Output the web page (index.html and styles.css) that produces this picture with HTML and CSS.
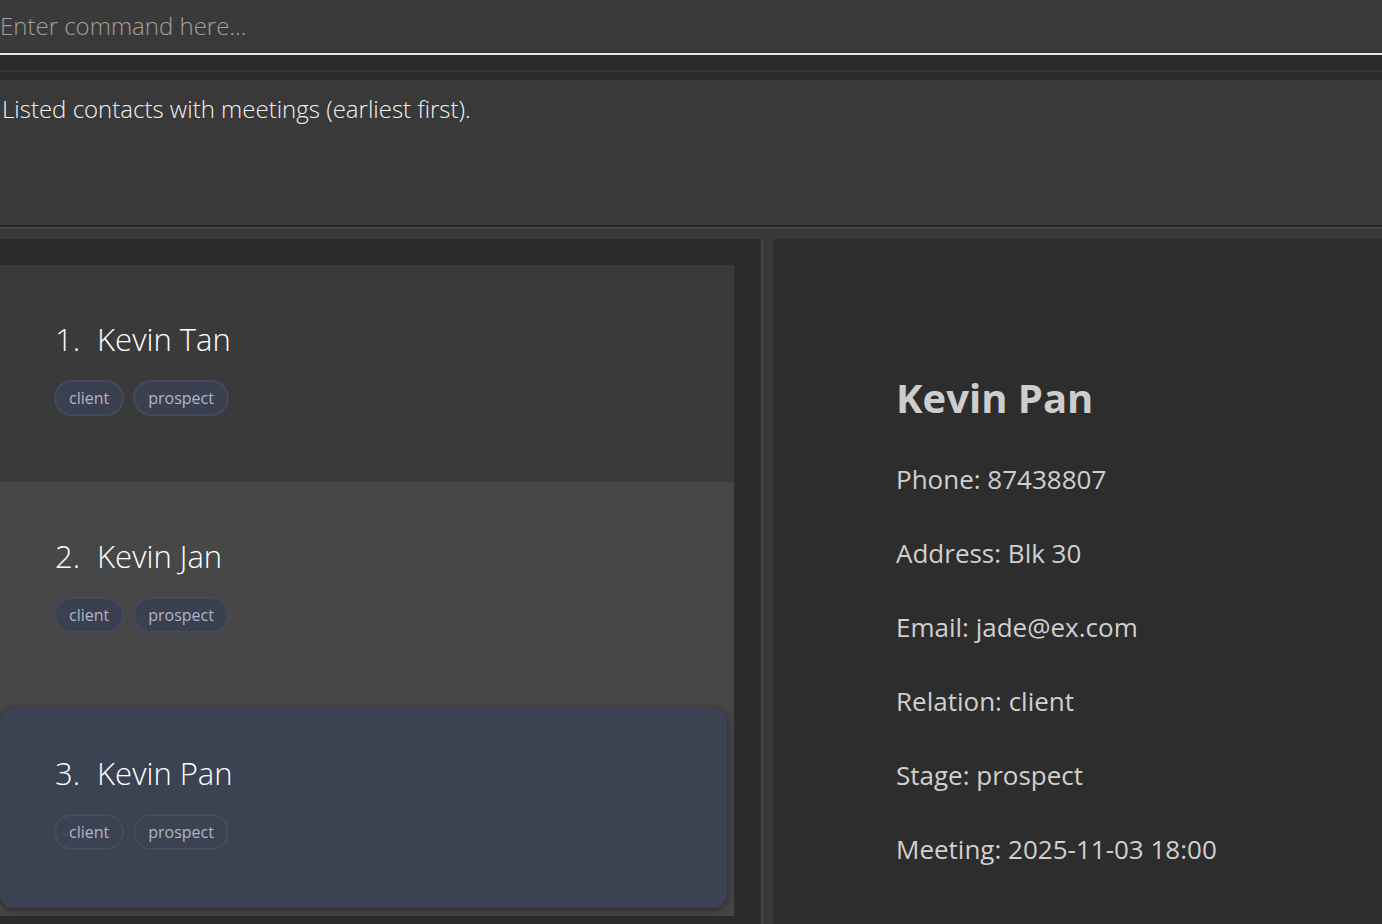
FILE: index.html
```html
<!DOCTYPE html>
<html lang="en">
<head>
<meta charset="utf-8">
<title>Contacts</title>
<link rel="stylesheet" href="styles.css">
</head>
<body>
<div class="app">
  <div class="command">
    <input class="command-input" type="text" placeholder="Enter command here...">
  </div>
  <div class="gap-bar"><div class="gap-line"></div></div>
  <div class="result">Listed contacts with meetings (earliest first).</div>
  <div class="result-divider"></div>
  <div class="main">
    <div class="list-pane">
      <div class="list">
        <div class="cell odd">
          <div class="card">
            <div class="name"><span class="idx">1.</span><span>Kevin Tan</span></div>
            <div class="tags"><span class="tag">client</span><span class="tag">prospect</span></div>
          </div>
        </div>
        <div class="cell even">
          <div class="card">
            <div class="name"><span class="idx">2.</span><span>Kevin Jan</span></div>
            <div class="tags"><span class="tag">client</span><span class="tag">prospect</span></div>
          </div>
        </div>
        <div class="cell selected">
          <div class="card">
            <div class="name"><span class="idx">3.</span><span>Kevin Pan</span></div>
            <div class="tags"><span class="tag">client</span><span class="tag">prospect</span></div>
          </div>
        </div>
      </div>
    </div>
    <div class="split"></div>
    <div class="detail-pane">
      <h1 class="detail-name">Kevin Pan</h1>
      <p class="detail-row">Phone: 87438807</p>
      <p class="detail-row">Address: Blk 30</p>
      <p class="detail-row">Email: jade@ex.com</p>
      <p class="detail-row">Relation: client</p>
      <p class="detail-row">Stage: prospect</p>
      <p class="detail-row">Meeting: 2025-11-03 18:00</p>
    </div>
  </div>
</div>
</body>
</html>
```
FILE: styles.css
```css
* { box-sizing: border-box; }
html, body { margin: 0; padding: 0; height: 100%; }
body {
  background: #2c2c2c;
  font-family: "Open Sans", "Noto Sans", sans-serif;
  overflow: hidden;
}
.app { display: flex; flex-direction: column; height: 924px; }

.command {
  height: 55px;
  background: #3a3a3a;
  border-bottom: 2px solid #e6e6e6;
  display: flex;
  align-items: center;
}
.command-input {
  width: 100%;
  background: transparent;
  border: none;
  outline: none;
  padding: 0 0 2px 0;
  font-family: inherit;
  font-size: 24px;
  font-weight: 300;
  color: #dcdcdc;
}
.command-input::placeholder { color: #a29f9a; }

.gap-bar { height: 25px; padding-top: 15px; background: #2b2b2b; }
.gap-line { height: 2px; background: #363636; }

.result {
  height: 145px;
  background: #393939;
  color: #f2f2f2;
  font-size: 24px;
  font-weight: 300;
  padding: 12px 0 0 2px;
}
.result-divider {
  height: 14px;
  background: #383838;
  border-top: 2px solid #2a2a2a;
  box-shadow: inset 0 2px 0 #474747;
}

.main { flex: 1; display: flex; min-height: 0; }
.list-pane { width: 761px; padding-top: 26px; background: #2c2c2c; }
.list { width: 734px; display: flex; flex-direction: column; }
.cell { height: 217px; }
.cell.odd { background: #3a3a3a; }
.cell.even { background: #474747; }
.cell.selected { background: #474747; padding: 9px 7px 8px 0; }
.card { height: 100%; padding: 54px 0 0 55px; }
.cell.selected .card {
  background: #3b4252;
  border-radius: 14px;
  box-shadow: 0 2px 8px rgba(0, 0, 0, 0.45);
  padding-top: 45px;
}
.name {
  display: flex;
  gap: 17px;
  color: #ffffff;
  font-size: 31px;
  font-weight: 300;
  line-height: 40px;
}
.tags { display: flex; gap: 9px; margin-top: 21px; margin-left: -1px; }
.tag {
  height: 36px;
  padding: 0 13px;
  border-radius: 18px;
  background: #3b4050;
  border: 2px solid #454a5a;
  color: #aeb6c6;
  font-size: 16px;
  line-height: 32px;
}
.cell.selected .tag { background: #3b4252; border-color: #464c5c; }

.split { width: 12px; background: #383838; border-left: 2px solid #444444; }
.detail-pane {
  flex: 1;
  background: #2d2d2d;
  padding: 133px 0 0 123px;
  color: #d0d0d0;
}
.detail-name {
  margin: 0 0 36px 0;
  font-size: 40px;
  font-weight: 700;
  line-height: 52px;
  color: #cdcdcd;
}
.detail-row {
  margin: 0 0 36px 0;
  font-size: 26px;
  line-height: 38px;
}
```
